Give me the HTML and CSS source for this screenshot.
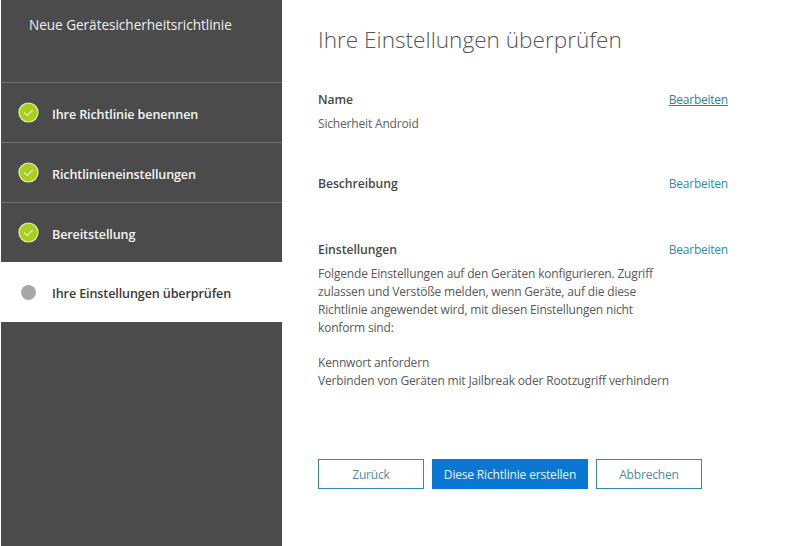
FILE: index.html
```html
<!DOCTYPE html>
<html lang="de">
<head>
<meta charset="utf-8">
<title>Neue Gerätesicherheitsrichtlinie</title>
<link rel="stylesheet" href="styles.css">
</head>
<body>
<div class="page">
  <aside class="side">
    <div class="side-title">Neue Gerätesicherheitsrichtlinie</div>
    <div class="step">
      <svg class="check" viewBox="0 0 22 22" aria-hidden="true"><circle cx="11" cy="11" r="10" fill="#a8cf1e" stroke="#e6efb8" stroke-width="1.2"/><path d="M6.5 11.2l3.2 3 5.8-6" fill="none" stroke="#eef5d2" stroke-width="1.2"/></svg>
      <span>Ihre Richtlinie benennen</span>
    </div>
    <div class="step">
      <svg class="check" viewBox="0 0 22 22" aria-hidden="true"><circle cx="11" cy="11" r="10" fill="#a8cf1e" stroke="#e6efb8" stroke-width="1.2"/><path d="M6.5 11.2l3.2 3 5.8-6" fill="none" stroke="#eef5d2" stroke-width="1.2"/></svg>
      <span>Richtlinieneinstellungen</span>
    </div>
    <div class="step">
      <svg class="check" viewBox="0 0 22 22" aria-hidden="true"><circle cx="11" cy="11" r="10" fill="#a8cf1e" stroke="#e6efb8" stroke-width="1.2"/><path d="M6.5 11.2l3.2 3 5.8-6" fill="none" stroke="#eef5d2" stroke-width="1.2"/></svg>
      <span>Bereitstellung</span>
    </div>
    <div class="step current">
      <i class="dot"></i>
      <span>Ihre Einstellungen überprüfen</span>
    </div>
  </aside>
  <main class="main">
    <h1 class="title">Ihre Einstellungen überprüfen</h1>
    <section class="block block-name">
      <div class="row"><h2>Name</h2><a class="edit under" href="#">Bearbeiten</a></div>
      <p class="value">Sicherheit Android</p>
    </section>
    <section class="block block-desc">
      <div class="row"><h2>Beschreibung</h2><a class="edit" href="#">Bearbeiten</a></div>
    </section>
    <section class="block block-set">
      <div class="row"><h2>Einstellungen</h2><a class="edit" href="#">Bearbeiten</a></div>
      <p class="text">Folgende Einstellungen auf den Geräten konfigurieren. Zugriff<br>zulassen und Verstöße melden, wenn Geräte, auf die diese<br>Richtlinie angewendet wird, mit diesen Einstellungen nicht<br>konform sind:</p>
      <p class="text gap">Kennwort anfordern<br>Verbinden von Geräten mit Jailbreak oder Rootzugriff verhindern</p>
    </section>
    <div class="actions">
      <button class="btn back">Zurück</button>
      <button class="btn primary">Diese Richtlinie erstellen</button>
      <button class="btn cancel">Abbrechen</button>
    </div>
  </main>
</div>
</body>
</html>
```
FILE: styles.css
```css
* { box-sizing: border-box; }
html, body { margin: 0; height: 100%; background: #fff; overflow: hidden; }
body { font-family: "Open Sans", "Noto Sans", sans-serif; color: #444; }
.page { display: flex; height: 546px; padding-left: 1px; }
.side { width: 281px; background: #4b4b4b; flex: none; color: #fff; }
.side-title { height: 82px; padding: 15px 0 0 28px; font-size: 13.6px; line-height: 20px; color: #eee; letter-spacing: -0.04px; }
.step { height: 60px; border-top: 1px solid #717171; display: flex; align-items: center; padding: 3px 0 0 17px; font-size: 12.6px; font-weight: 600; color: #f4f4f4; letter-spacing: -0.13px; }
.step span { margin-left: 13px; }
.check { width: 21px; height: 21px; margin-top: -4px; flex: none; }
.current { background: #fff; color: #3a3a3a; border-top: 0; height: 60px; padding-top: 2px; }
.dot { width: 15px; height: 15px; margin: -2px 3px 0 3px; border-radius: 50%; background: #a8a8a8; flex: none; }
.main { flex: 1; padding: 0 0 0 36px; }
.title { margin: 0; padding-top: 24px; height: 82px; font-size: 22.6px; line-height: 32px; font-weight: 300; color: #555; }
.row { width: 410px; display: flex; justify-content: space-between; align-items: center; height: 20px; }
h2 { margin: 0; font-size: 12.2px; font-weight: 600; color: #484848; letter-spacing: -0.05px; }
.edit { font-size: 12px; letter-spacing: -0.24px; color: #2a90aa; text-decoration: none; }
.under { color: #2f7f9b; text-decoration: underline; }
.value { margin: 6px 0 0; font-size: 12px; letter-spacing: -0.17px; line-height: 18px; color: #606060; }
.block-name { height: 84px; padding-top: 7px; }
.block-desc { height: 66px; padding-top: 7px; }
.block-set { height: 227px; padding-top: 7px; }
.text { margin: 0; font-size: 12px; letter-spacing: -0.17px; line-height: 18px; color: #585858; }
.text:first-of-type { margin-top: 6px; }
.gap { margin-top: 17px; }
.actions { display: flex; gap: 8px; }
.btn { height: 30px; font: inherit; font-size: 12px; letter-spacing: -0.17px; padding: 0; border: 1px solid #2f8fa8; background: #fff; color: #4a8ea6; }
.back { width: 106px; }
.primary { width: 156px; background: #0a78d2; border-color: #0a78d2; color: #e9f2fa; }
.cancel { width: 106px; }
```
